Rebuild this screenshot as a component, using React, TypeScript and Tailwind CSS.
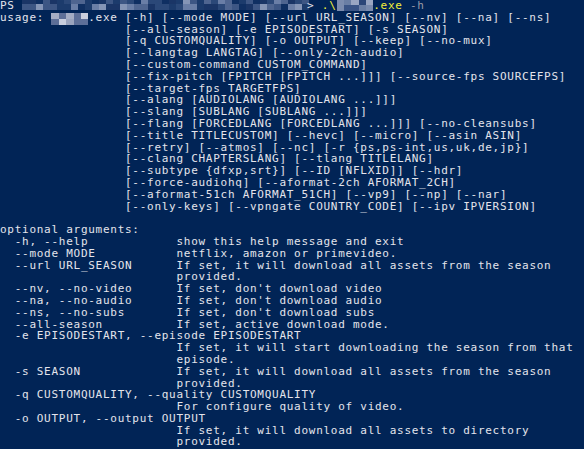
import React from "react";

const IND = " ".repeat(17);

function Mosaic({ cols, rows, cell, palette, seed, className }: { cols: number; rows: number; cell: number; palette: string[]; seed: number; className?: string }) {
  const cells: React.ReactNode[] = [];
  let s = seed;
  for (let r = 0; r < rows; r++) {
    for (let c = 0; c < cols; c++) {
      s = (s * 9301 + 49297) % 233280;
      const idx = Math.floor((s / 233280) * palette.length);
      cells.push(
        <span
          key={r + "-" + c}
          className="block"
          style={{ backgroundColor: palette[idx], width: cell, height: 12 / rows }}
        />
      );
    }
  }
  return (
    <span
      className={"inline-grid align-top " + (className ?? "")}
      style={{ gridTemplateColumns: `repeat(${cols}, ${cell}px)`, height: 12 }}
    >
      {cells}
    </span>
  );
}

const bluePal = ["#0f2f62", "#1c3b6c", "#2b4878", "#3d5684", "#4f6590", "#6a7ea6", "#8595b6", "#1a3566"];
const greyPal = ["#9aa4be", "#b8c0d2", "#7f8cae", "#c8cede", "#5d6f98", "#a4adc4"];
const pathPal = ["#3a5486", "#5b7098", "#7a8bae", "#9aa6c2", "#2c4678", "#6a7ea4"];

const usageLines = [
  "[--all-season] [-e EPISODESTART] [-s SEASON]",
  "[-q CUSTOMQUALITY] [-o OUTPUT] [--keep] [--no-mux]",
  "[--langtag LANGTAG] [--only-2ch-audio]",
  "[--custom-command CUSTOM_COMMAND]",
  "[--fix-pitch [FPITCH [FPITCH ...]]] [--source-fps SOURCEFPS]",
  "[--target-fps TARGETFPS]",
  "[--alang [AUDIOLANG [AUDIOLANG ...]]]",
  "[--slang [SUBLANG [SUBLANG ...]]]",
  "[--flang [FORCEDLANG [FORCEDLANG ...]]] [--no-cleansubs]",
  "[--title TITLECUSTOM] [--hevc] [--micro] [--asin ASIN]",
  "[--retry] [--atmos] [--nc] [-r {ps,ps-int,us,uk,de,jp}]",
  "[--clang CHAPTERSLANG] [--tlang TITLELANG]",
  "[--subtype {dfxp,srt}] [--ID [NFLXID]] [--hdr]",
  "[--force-audiohq] [--aformat-2ch AFORMAT_2CH]",
  "[--aformat-51ch AFORMAT_51CH] [--vp9] [--np] [--nar]",
  "[--only-keys] [--vpngate COUNTRY_CODE] [--ipv IPVERSION]",
];

const optLines = [
  "",
  "optional arguments:",
  "  -h, --help            show this help message and exit",
  "  --mode MODE           netflix, amazon or primevideo.",
  "  --url URL_SEASON      If set, it will download all assets from the season",
  "                        provided.",
  "  --nv, --no-video      If set, don't download video",
  "  --na, --no-audio      If set, don't download audio",
  "  --ns, --no-subs       If set, don't download subs",
  "  --all-season          If set, active download mode.",
  "  -e EPISODESTART, --episode EPISODESTART",
  "                        If set, it will start downloading the season from that",
  "                        episode.",
  "  -s SEASON             If set, it will download all assets from the season",
  "                        provided.",
  "  -q CUSTOMQUALITY, --quality CUSTOMQUALITY",
  "                        For configure quality of video.",
  "  -o OUTPUT, --output OUTPUT",
  "                        If set, it will download all assets to directory",
  "                        provided.",
];

export default function App() {
  return (
    <div className="w-[584px] h-[449px] overflow-hidden bg-[#012456] text-[#e4e4ec] font-['DejaVu_Sans_Mono',monospace] text-[11px] tracking-[0.73px] leading-[11.8px] whitespace-pre">
      <div className="h-[11.8px] flex items-start">
        <span>PS </span>
        <Mosaic cols={41} rows={2} cell={7} palette={bluePal} seed={17} className="-mt-[2px]" />
        <span className="-ml-[2px]">{"> "}</span>
        <span className="text-[#f2ee3a]">.\</span>
        <Mosaic cols={5} rows={2} cell={7.35} palette={pathPal} seed={5} className="-mt-[1px]" />
        <span className="text-[#f2ee3a]">.exe</span>
        <span className="text-[#9a9aa8]"> -h</span>
      </div>
      <div className="h-[11.8px] flex items-start">
        <span>{"usage: "}</span>
        <Mosaic cols={5} rows={2} cell={7.35} palette={greyPal} seed={42} className="mt-[1px]" />
        <span>.exe [-h] [--mode MODE] [--url URL_SEASON] [--nv] [--na] [--ns]</span>
      </div>
      {usageLines.map((l, i) => (
        <div key={"u" + i} className="h-[11.8px]">
          {IND + l}
        </div>
      ))}
      {optLines.map((l, i) => (
        <div key={"o" + i} className="h-[11.8px]">
          {l}
        </div>
      ))}
    </div>
  );
}
